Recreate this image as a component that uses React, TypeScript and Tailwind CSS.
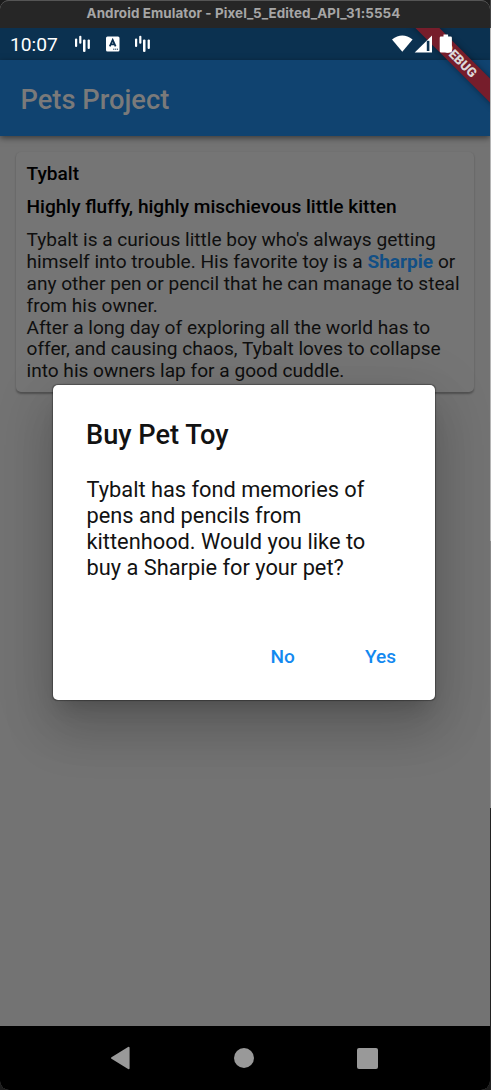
import React from 'react';

const BarsIcon: React.FC = () => (
  <svg width="18" height="20" viewBox="0 0 18 20" fill="#fff">
    <rect x="1" y="4.5" width="2.2" height="8.5" rx="1" />
    <rect x="5.2" y="1.8" width="2.2" height="8" rx="1" />
    <rect x="9" y="5.5" width="2.5" height="12.5" rx="1.1" />
    <rect x="13.6" y="5.5" width="2.3" height="9.5" rx="1" />
  </svg>
);

const StatusBar: React.FC = () => (
  <div className="relative flex h-[32px] shrink-0 items-center bg-[#0b3150] text-white">
    <span className="ml-[10px] w-[64px] pt-px text-[19.2px] leading-none">10:07</span>
    <BarsIcon />
    <svg className="ml-[14px]" width="14" height="16" viewBox="0 0 14 16">
      <rect x="0" y="0.5" width="13.5" height="15" rx="1.5" fill="#fff" />
      <path d="M3.8 10.4 L6.7 4 L9.6 10.4 M4.8 8.3 H8.6" fill="none" stroke="#0b2f50" strokeWidth="1.8" />
      <path d="M7.2 13.2 H12" stroke="#0b2f50" strokeWidth="1" strokeDasharray="1.2 0.7" />
    </svg>
    <span className="ml-[14px]">
      <BarsIcon />
    </span>
    {/* Wifi, signal and battery sit above the debug ribbon */}
    <svg className="z-20 ml-auto mr-[33px]" width="65" height="20" viewBox="0 0 65 20" fill="#fff">
      <path d="M0 5.6 Q10.3 -2.8 20.6 5.6 L10.3 17.8 Z" />
      <path d="M40 1.5 V18.5 H22.7 Z" />
      <rect x="34.8" y="6.8" width="2.6" height="10.2" fill="#0b3150" />
      <path d="M51.5 0.6 h4.6 v2 h2.6 q1.2 0 1.2 1.2 V17.1 q0 1.3 -1.2 1.3 h-9.8 q-1.2 0 -1.2 -1.3 V3.8 q0 -1.2 1.2 -1.2 h2.6 z" />
    </svg>
  </div>
);

const DebugRibbon: React.FC = () => (
  <div className="absolute right-0 top-[28px] z-10 h-[90px] w-[90px] overflow-hidden">
    <div className="absolute left-[-1px] top-[23px] flex h-[16.5px] w-[120px] rotate-45 items-center justify-center bg-[#761d2b] pl-[3px] text-[13px] font-black leading-none text-[#dcd8d9] shadow-[0_0_6px_rgba(0,0,0,0.4)]">
      DEBUG
    </div>
  </div>
);

const PetCard: React.FC = () => (
  <div className="ml-[16px] mr-[16px] mt-[16px] h-[240px] whitespace-nowrap rounded-[5px] bg-[#757575] pl-[10.5px] pt-[11.4px] text-black shadow-[0_1.5px_2px_rgba(0,0,0,0.3)]">
    <h2 className="text-[19.1px] font-medium leading-[22px]">Tybalt</h2>
    <h3 className="mt-[11px] text-[19.1px] font-medium leading-[22px]">
      Highly fluffy, highly mischievous little kitten
    </h3>
    <p className="mt-[11px] text-[19.1px] leading-[21.8px] text-[#0f0f0f]">
      Tybalt is a curious little boy who's always getting
      <br />
      himself into trouble. His favorite toy is a <span className="font-bold text-[#124f85]">Sharpie</span> or
      <br />
      any other pen or pencil that he can manage to steal
      <br />
      from his owner.
      <br />
      After a long day of exploring all the world has to
      <br />
      offer, and causing chaos, Tybalt loves to collapse
      <br />
      into his owners lap for a good cuddle.
    </p>
  </div>
);

const ToyDialog: React.FC = () => (
  <div className="flex h-[315px] w-[382px] flex-col whitespace-nowrap rounded-[5px] bg-white px-[33px] pt-[35px] text-[#121212] shadow-[0_0_1px_0.5px_rgba(0,0,0,0.3),0_14px_18px_-9px_rgba(0,0,0,0.16),0_30px_48px_4px_rgba(0,0,0,0.15),0_11px_57px_10px_rgba(0,0,0,0.08)]">
    <h1 className="text-[27.2px] font-medium leading-[30px]">Buy Pet Toy</h1>
    <p className="mt-[27px] pl-[0.5px] text-[21.8px] leading-[26px]">
      Tybalt has fond memories of
      <br />
      pens and pencils from
      <br />
      kittenhood. Would you like to
      <br />
      buy a Sharpie for your pet?
    </p>
    <div className="mt-[64px] flex justify-end gap-[70px] pr-[6px] text-[19.1px] font-medium leading-[24px] text-[#1389f0]">
      <button>No</button>
      <button>Yes</button>
    </div>
  </div>
);

const NavBar: React.FC = () => (
  <div className="flex h-[64px] shrink-0 items-center bg-black pl-[110px]">
    <svg width="20" height="24" viewBox="0 0 20 24">
      <path d="M18.6 1.8 V22.2 L2 12 Z" fill="#999" stroke="#999" strokeWidth="2" strokeLinejoin="round" />
    </svg>
    <span className="ml-[104px] h-[20px] w-[20px] rounded-full bg-[#999]" />
    <span className="ml-[103px] h-[21px] w-[21px] rounded-[2px] bg-[#999]" />
  </div>
);

const App: React.FC = () => {
  return (
    <div className="flex h-[1090px] w-[491px] overflow-hidden bg-[#1c1c1c] font-[Roboto,sans-serif]">
      <div className="relative flex w-[490px] flex-col overflow-hidden rounded-[9px] bg-[#737373]">
        <header className="flex h-[28px] shrink-0 items-center justify-center whitespace-nowrap rounded-t-[9px] border-t border-[#555] bg-[#262626] pb-[3px] pr-[3px] font-[Inter,sans-serif] text-[13.4px] font-bold tracking-[0.1px] text-[#a6a6a6]">
          Android Emulator - Pixel_5_Edited_API_31:5554
        </header>
        <StatusBar />
        <DebugRibbon />

        <main className="relative flex-1">
          <div className="relative flex h-[76px] items-center bg-[#104370] pl-[20.5px] pt-[4px] text-[27.3px] font-medium text-[#7a7a7a] shadow-[0_2px_6px_rgba(0,0,0,0.5)]">
            Pets Project
          </div>
          <PetCard />
          <div className="absolute inset-0 flex items-center justify-center pb-[2px] pr-[2px]">
            <ToyDialog />
          </div>
        </main>

        <NavBar />
      </div>

      {/* Sliver of the desktop behind the window */}
      <div className="flex w-px flex-col">
        <div className="h-[28px] bg-[#444]" />
        <div className="h-[513px] bg-[#b5b5b5]" />
        <div className="h-[267px] bg-[#888]" />
        <div className="flex-1 bg-[#222]" />
      </div>
    </div>
  );
};

export default App;
